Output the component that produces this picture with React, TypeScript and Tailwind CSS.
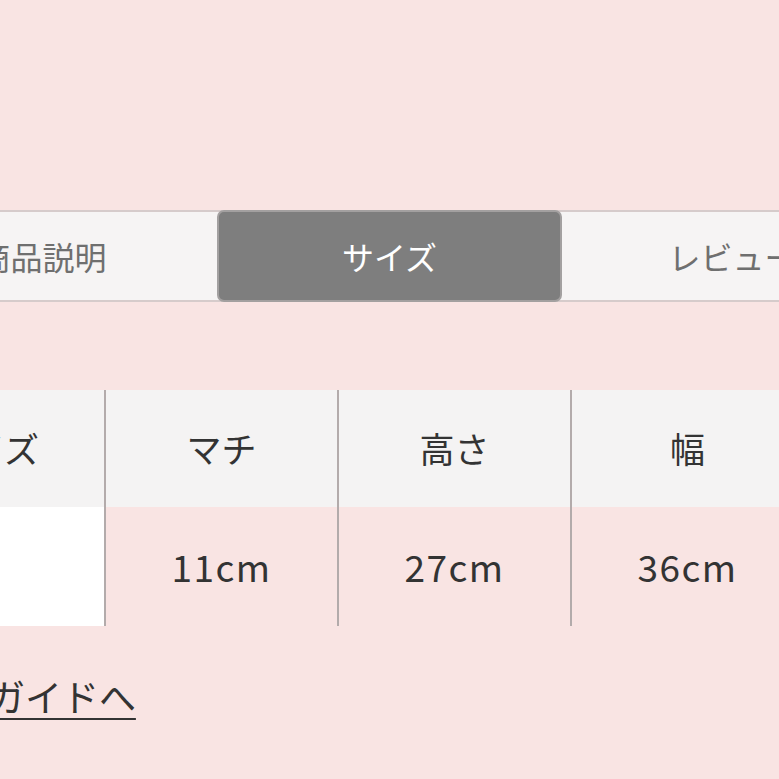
export default function App() {
  const headers = ['サイズ', 'マチ', '高さ', '幅'];
  const values = ['', '11cm', '27cm', '36cm'];

  return (
    <div className="w-[779px] h-[779px] overflow-hidden bg-[#f9e4e3] font-['Noto_Sans_CJK_JP','Noto_Sans',sans-serif]">
      <div className="-ml-[130px] w-[1100px]">
        {/* Tabs */}
        <div className="mt-[210px] flex h-[92px] bg-[#f6f4f4] border-y-2 border-[#d6cbcb]">
          <div className="w-[345px] flex items-center justify-center text-[32px] text-[#6f6f6f]">
            商品説明
          </div>
          <div className="ml-[2px] -my-[2px] w-[345px] flex items-center justify-center rounded-[7px] bg-[#7e7e7e] border-2 border-[#a3a0a0] text-[32px] text-white">
            サイズ
          </div>
          <div className="ml-[2px] w-[345px] flex items-center justify-center pr-[8px] text-[32px] text-[#6f6f6f]">
            レビュー
          </div>
        </div>

        {/* Size table */}
        <div className="mt-[88px] flex">
          {headers.map((h, i) => (
            <div
              key={h}
              className={
                i === 0
                  ? 'w-[236px] flex flex-col border-r-2 border-[#b3abab]'
                  : 'w-[233px] flex flex-col border-r-2 border-[#b3abab]'
              }
            >
              <div className="h-[117px] flex items-center justify-center bg-[#f4f3f3] text-[35px] text-[#333]">
                {h}
              </div>
              <div
                className={
                  i === 0
                    ? 'h-[119px] flex items-center justify-center bg-white text-[37px] text-[#333]'
                    : 'h-[119px] flex items-center justify-center bg-[#f9e4e3] text-[37px] text-[#333] tracking-[1.5px]'
                }
              >
                {values[i]}
              </div>
            </div>
          ))}
        </div>

        {/* Guide link */}
        <div className="mt-[46px] pl-[8px]">
          <a className="text-[37px] leading-[48px] text-[#333] underline underline-offset-[6px] decoration-2">
            サイズガイドへ
          </a>
        </div>
      </div>
    </div>
  );
}
